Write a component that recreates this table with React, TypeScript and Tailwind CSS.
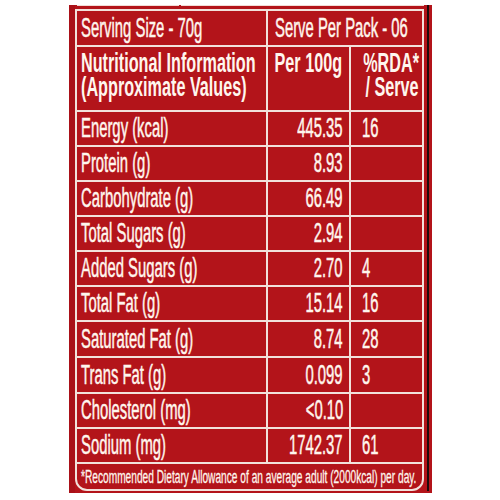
import React from "react";

type Row = { label: string; per100: string; rda: string; h: string };

const rows: Row[] = [
  { label: "Energy (kcal)", per100: "445.35", rda: "16", h: "h-[33px]" },
  { label: "Protein (g)", per100: "8.93", rda: "", h: "h-[33px]" },
  { label: "Carbohydrate (g)", per100: "66.49", rda: "", h: "h-[33px]" },
  { label: "Total Sugars (g)", per100: "2.94", rda: "", h: "h-[33px]" },
  { label: "Added Sugars (g)", per100: "2.70", rda: "4", h: "h-[33px]" },
  { label: "Total Fat (g)", per100: "15.14", rda: "16", h: "h-[33px]" },
  { label: "Saturated Fat (g)", per100: "8.74", rda: "28", h: "h-[34px]" },
  { label: "Trans Fat (g)", per100: "0.099", rda: "3", h: "h-[34px]" },
  { label: "Cholesterol (mg)", per100: "<0.10", rda: "", h: "h-[33px]" },
  { label: "Sodium (mg)", per100: "1742.37", rda: "61", h: "h-[33px]" },
];

const cell = "bg-[#b3141a] flex items-center";
const txt =
  "inline-block whitespace-nowrap text-[27px] leading-none text-[#fff6ee] [-webkit-text-stroke:0.5px_#fff6ee] scale-x-[0.55]";
const head =
  "inline-block h-[24px] whitespace-nowrap text-[27px] leading-[24px] font-bold text-[#fff6ee] scale-x-[0.6]";

export default function App() {
  return (
    <div className="w-[500px] h-[500px] bg-white overflow-hidden font-['Liberation_Sans',Arial,sans-serif]">
      <div className="ml-[69px] mt-[5px] w-[363px] h-[488px] bg-[#b3141a] flex">
        {/* left edge */}
        <div className="w-[6px] bg-[#a91118]" />

        <div className="w-[349px] flex flex-col">
          {/* top double rule */}
          <div className="h-[4px] flex gap-[2px] pl-[2px]">
            <div className="w-[102px] h-[1px] bg-[#f2dcd6]" />
            <div className="w-[243px] h-[1px] bg-[#f2dcd6]" />
          </div>

          {/* table */}
          <div className="border-2 border-[#f2e2dc] rounded-b-[12px] bg-[#f2e2dc] grid grid-cols-[189px_81px_71px] gap-[2px]">
            <div className={`${cell} h-[34px] pl-[4px]`}>
              <span className={`${txt} origin-left`}>Serving Size - 70g</span>
            </div>
            <div className={`${cell} h-[34px] col-span-2 pl-[7px]`}>
              <span className={`${txt} origin-left`}>Serve Per Pack - 06</span>
            </div>

            <div className="bg-[#b3141a] h-[63px] pl-[4px] pt-[4px] flex flex-col">
              <span className={`${head} origin-left`}>Nutritional Information</span>
              <span className={`${head} origin-left`}>(Approximate Values)</span>
            </div>
            <div className="bg-[#b3141a] h-[63px] pt-[4px] flex justify-center">
              <span className={`${head} origin-center`}>Per 100g</span>
            </div>
            <div className="bg-[#b3141a] h-[63px] pt-[4px] pr-[3px] flex flex-col items-end">
              <span className={`${head} origin-right`}>%RDA*</span>
              <span className={`${head} origin-right`}>/ Serve</span>
            </div>

            {rows.map((r) => (
              <React.Fragment key={r.label}>
                <div className={`${cell} ${r.h} pl-[4px]`}>
                  <span className={`${txt} origin-left`}>{r.label}</span>
                </div>
                <div className={`${cell} ${r.h} justify-end pr-[6px]`}>
                  <span className={`${txt} origin-right`}>{r.per100}</span>
                </div>
                <div className={`${cell} ${r.h} pl-[11px]`}>
                  <span className={`${txt} origin-left`}>{r.rda}</span>
                </div>
              </React.Fragment>
            ))}

            <div className={`${cell} h-[25px] col-span-3 pl-[4px] rounded-b-[10px]`}>
              <span className="inline-block whitespace-nowrap text-[19px] leading-none text-[#fff6ee] [-webkit-text-stroke:0.3px_#fff6ee] scale-x-[0.535] origin-left">
                *Recommended Dietary Allowance of an average adult (2000kcal) per day.
              </span>
            </div>
          </div>
        </div>

        {/* right edge */}
        <div className="w-[3px]" />
        <div className="w-[2px] h-[486px] bg-[#1c0b0b]" />
        <div className="w-[3px]" />
      </div>
    </div>
  );
}
